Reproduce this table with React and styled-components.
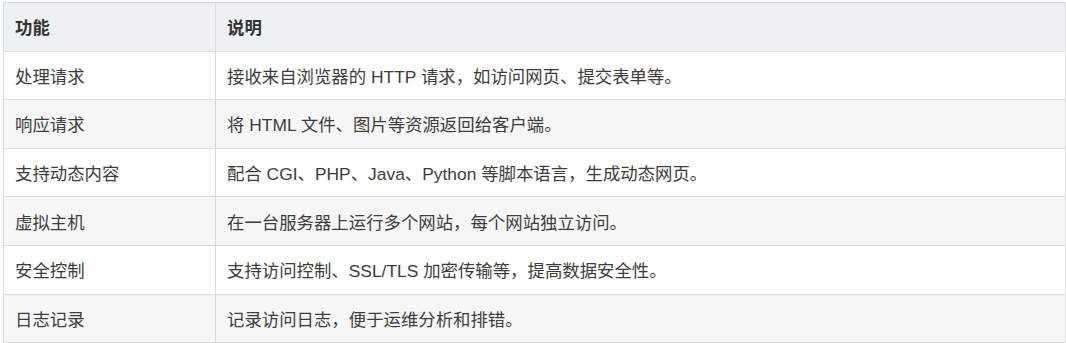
import React from "react";
import styled, { createGlobalStyle } from "styled-components";

const Global = createGlobalStyle`
  html, body { margin: 0; padding: 0; background: #ffffff; }
  body { font-family: "Liberation Sans", "Noto Sans CJK SC", sans-serif; }
`;

const Wrap = styled.div`
  padding: 2px 0 0 3px;
`;

const Table = styled.table`
  width: 1063px;
  border-collapse: collapse;
  table-layout: fixed;
  font-size: 17.4px;
  color: #3d3d3d;
`;

const HeadCell = styled.th`
  text-align: left;
  font-weight: bold;
  color: #333;
  background: #eef1f4;
  border: 1px solid #dcdde0;
  padding: 0 11px;
  height: 48.6px;
  width: ${(p) => p.$w || "auto"};
  box-sizing: border-box;
`;

const Row = styled.tr`
  background: ${(p) => (p.$alt ? "#f6f6f6" : "#ffffff")};
`;

const Cell = styled.td`
  border: 1px solid #dcdcdc;
  padding: 0 11px;
  height: 48.6px;
  box-sizing: border-box;
  white-space: nowrap;
`;

const rows = [
  ["处理请求", "接收来自浏览器的 HTTP 请求，如访问网页、提交表单等。"],
  ["响应请求", "将 HTML 文件、图片等资源返回给客户端。"],
  ["支持动态内容", "配合 CGI、PHP、Java、Python 等脚本语言，生成动态网页。"],
  ["虚拟主机", "在一台服务器上运行多个网站，每个网站独立访问。"],
  ["安全控制", "支持访问控制、SSL/TLS 加密传输等，提高数据安全性。"],
  ["日志记录", "记录访问日志，便于运维分析和排错。"],
];

export default function App() {
  return (
    <Wrap>
      <Global />
      <Table>
        <thead>
          <tr>
            <HeadCell $w="212px">功能</HeadCell>
            <HeadCell>说明</HeadCell>
          </tr>
        </thead>
        <tbody>
          {rows.map(([a, b], i) => (
            <Row key={a} $alt={i % 2 === 1}>
              <Cell>{a}</Cell>
              <Cell>{b}</Cell>
            </Row>
          ))}
        </tbody>
      </Table>
    </Wrap>
  );
}
